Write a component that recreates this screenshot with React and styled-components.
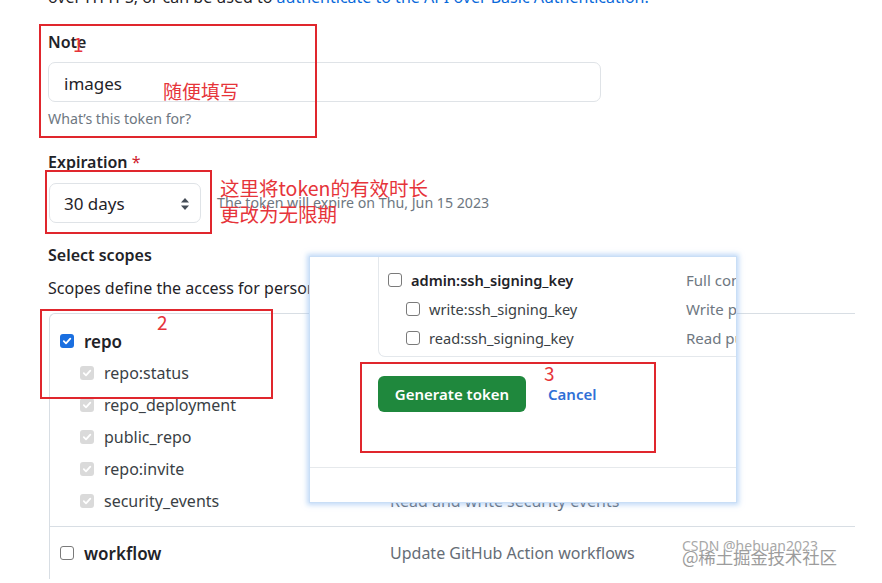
import React from "react";
import styled, { createGlobalStyle } from "styled-components";

const Global = createGlobalStyle`
  html, body { margin: 0; padding: 0; background: #fff; }
  body {
    font-family: "Noto Sans", "Noto Sans CJK SC", sans-serif;
    color: #1f2328;
  }
  * { box-sizing: border-box; }
`;

const Page = styled.div`
  position: relative;
  width: 882px;
  height: 583px;
  overflow: hidden;
  background: #fff;
`;

const Content = styled.div`
  display: flex;
  flex-direction: column;
  align-items: flex-start;
  padding-left: 48px;
`;

const TopText = styled.p`
  position: relative;
  margin: -13px 0 0;
  font-size: 16px;
  line-height: 20px;
  height: 20px;
  white-space: nowrap;
  color: #1f2328;
`;

const TopRule = styled.span`
  position: absolute;
  left: 615px;
  top: 12px;
  width: 190px;
  border-top: 1px solid #dcdfe3;
`;

const Link = styled.span`
  color: #0969da;
`;

const Label = styled.div`
  margin-top: ${p => p.$mt}px;
  font-size: 16px;
  font-weight: 600;
  line-height: 24px;
  color: #1f2328;
`;

const Req = styled.span`
  color: #cf222e;
  font-weight: 400;
`;

const TextInput = styled.div`
  margin-top: 8px;
  width: 553px;
  height: 40px;
  border: 1px solid #dfe3e7;
  border-radius: 7px;
  padding-left: 15px;
  padding-top: 2px;
  display: flex;
  align-items: center;
  font-size: 17px;
  color: #1f2328;
`;

const Hint = styled.div`
  margin-top: ${p => p.$mt || 0}px;
  font-size: 14.2px;
  line-height: 20px;
  color: #6e7781;
  white-space: nowrap;
`;

const SelectRow = styled.div`
  margin-top: 9px;
  margin-left: 1px;
  display: flex;
  align-items: center;
  gap: 16px;
`;

const Select = styled.div`
  width: 152px;
  height: 40px;
  border: 1px solid #dfe3e7;
  border-radius: 7px;
  padding: 1px 10px 0 14px;
  display: flex;
  align-items: center;
  justify-content: space-between;
  font-size: 17px;
  color: #1f2328;
`;

const Para = styled.div`
  margin-top: 9px;
  font-size: 16px;
  line-height: 24px;
  white-space: nowrap;
  color: #1f2328;
`;

const ScopeTable = styled.div`
  margin-top: 13px;
  margin-left: 1px;
  width: 806px;
  border-left: 1px solid #d8dee4;
  border-top: 1px solid #d8dee4;
  border-top-left-radius: 6px;
`;

const Group = styled.div`
  padding: ${p => p.$pt}px 0 ${p => p.$pb}px;
  border-top: ${p => (p.$first ? "none" : "1px solid #d8dee4")};
`;

const Row = styled.div`
  display: grid;
  grid-template-columns: 330px 1fr;
  align-items: center;
  height: 32px;
  padding-left: 10px;
  font-size: 16px;
  white-space: nowrap;
`;

const NameCell = styled.div`
  display: flex;
  align-items: center;
  gap: 10px;
  padding-left: ${p => (p.$sub ? 20 : 0)}px;
  font-weight: ${p => (p.$sub ? 400 : 600)};
  color: ${p => (p.$sub ? "#3a3f45" : "#1f2328")};
  font-size: ${p => (p.$sub ? 16 : 17)}px;
`;

const Desc = styled.div`
  color: #656d76;
  font-size: 16px;
  overflow: hidden;
`;

const Box = styled.span`
  flex: none;
  width: ${p => p.$size}px;
  height: ${p => p.$size}px;
  border-radius: 3px;
  display: inline-flex;
  align-items: center;
  justify-content: center;
  ${p =>
    p.$state === "checked"
      ? "background:#1a6fe0; border:none;"
      : p.$state === "disabled"
      ? "background:#dadada; border:none;"
      : "background:#fff; border:1.5px solid #7a7a7a;"}
`;

const Checkbox = ({ state, size = 14 }) => (
  <Box $state={state} $size={size}>
    {state !== "empty" && (
      <svg width={size - 4} height={size - 4} viewBox="0 0 10 10">
        <path d="M1.8 5.2 L4 7.3 L8.3 2.6" fill="none" stroke="#fff" strokeWidth="1.8" strokeLinecap="round" strokeLinejoin="round" />
      </svg>
    )}
  </Box>
);

/* Overlaid pasted screenshot */
const Popup = styled.div`
  position: absolute;
  left: 309px;
  top: 256px;
  width: 428px;
  height: 247px;
  background: #fff;
  border: 1px solid #c9def6;
  box-shadow: 0 0 5px 2px rgba(140, 185, 240, 0.55);
  overflow: hidden;
  display: flex;
  flex-direction: column;
`;

const PopupTop = styled.div`
  padding-left: 68px;
  display: flex;
  flex-direction: column;
`;

const InnerBox = styled.div`
  width: 400px;
  height: 101px;
  margin-top: -1px;
  padding-top: 9px;
  border-left: 1px solid #e4e8ec;
  border-bottom: 1px solid #e4e8ec;
  border-bottom-left-radius: 7px;
`;

const PRow = styled.div`
  display: grid;
  grid-template-columns: 298px 1fr;
  align-items: center;
  height: 29px;
  padding-left: 9px;
  white-space: nowrap;
  font-size: 14.6px;
`;

const PName = styled.div`
  display: flex;
  align-items: center;
  gap: 9px;
  padding-left: ${p => (p.$sub ? 18 : 0)}px;
  font-weight: ${p => (p.$sub ? 400 : 600)};
  color: ${p => (p.$sub ? "#3a3f45" : "#1f2328")};
`;

const PDesc = styled.div`
  color: #6e7781;
  font-size: 15px;
`;

const ButtonRow = styled.div`
  margin-top: 19px;
  display: flex;
  align-items: center;
  gap: 22px;
`;

const GreenButton = styled.div`
  width: 148px;
  height: 36px;
  border-radius: 6px;
  background: #1f883d;
  color: #fff;
  font-size: 15px;
  font-weight: 600;
  display: flex;
  align-items: center;
  justify-content: center;
`;

const CancelLink = styled.div`
  color: #2f6fd6;
  font-size: 15px;
  font-weight: 600;
`;

const PopupRule = styled.div`
  margin-top: 55px;
  border-top: 1px solid #e6e9ec;
`;

/* Red annotations */
const RedBox = styled.div`
  position: absolute;
  left: ${p => p.$x}px;
  top: ${p => p.$y}px;
  width: ${p => p.$w}px;
  height: ${p => p.$h}px;
  border: 2px solid #e0262d;
`;

const RedNote = styled.div`
  position: absolute;
  left: ${p => p.$x}px;
  top: ${p => p.$y}px;
  font-family: "Noto Sans CJK SC", "Noto Sans", sans-serif;
  font-size: ${p => p.$fs}px;
  line-height: ${p => p.$lh || p.$fs + 6}px;
  font-weight: ${p => p.$fw || 400};
  color: #e6343a;
  white-space: nowrap;
`;

const Watermark = styled.div`
  position: absolute;
  left: 682px;
  top: 537px;
  display: flex;
  flex-direction: column;
  font-family: "Noto Sans", "Noto Sans CJK SC", sans-serif;
  white-space: nowrap;
`;

const WmTop = styled.span`
  font-size: 14px;
  line-height: 18px;
  color: #a8a8a8;
`;

const WmBottom = styled.span`
  margin-top: -9px;
  font-family: "Noto Sans CJK SC", sans-serif;
  font-size: 17.5px;
  line-height: 22px;
  color: #9c9c9c;
  letter-spacing: -0.2px;
  text-shadow: 0 0 1px #fff, 0 0 1px #fff;
`;

const repoSubs = [
  ["repo:status", "Access commit status"],
  ["repo_deployment", "Access deployment status"],
  ["public_repo", "Access public repositories"],
  ["repo:invite", "Access repository invitations"],
  ["security_events", "Read and write security events"],
];

const sshRows = [
  ["admin:ssh_signing_key", "Full control of public user SSH signing keys", false],
  ["write:ssh_signing_key", "Write public user SSH signing keys", true],
  ["read:ssh_signing_key", "Read public user SSH signing keys", true],
];

export default function App() {
  return (
    <Page>
      <Global />
      <Content>
        <TopText>
          over HTTPS, or can be used to <Link>authenticate to the API over Basic Authentication.</Link>
          <TopRule />
        </TopText>

        <Label $mt={23}>Note</Label>
        <TextInput>images</TextInput>
        <Hint $mt={7}>What’s this token for?</Hint>

        <Label $mt={21}>
          Expiration <Req>*</Req>
        </Label>
        <SelectRow>
          <Select>
            <span>30 days</span>
            <svg width="10" height="14" viewBox="0 0 10 14">
              <path d="M5 1 L9 5.5 H1 Z" fill="#444c56" />
              <path d="M5 13 L9 8.5 H1 Z" fill="#444c56" />
            </svg>
          </Select>
          <Hint>The token will expire on Thu, Jun 15 2023</Hint>
        </SelectRow>

        <Label $mt={20}>Select scopes</Label>
        <Para>
          Scopes define the access for personal tokens. <Link>Read more about OAuth scopes.</Link>
        </Para>

        <ScopeTable>
          <Group $first $pt={11} $pb={9}>
            <Row>
              <NameCell>
                <Checkbox state="checked" />
                repo
              </NameCell>
              <Desc>Full control of private repositories</Desc>
            </Row>
            {repoSubs.map(([n, d]) => (
              <Row key={n}>
                <NameCell $sub>
                  <Checkbox state="disabled" />
                  {n}
                </NameCell>
                <Desc>{d}</Desc>
              </Row>
            ))}
          </Group>
          <Group $pt={10} $pb={10}>
            <Row>
              <NameCell>
                <Checkbox state="empty" />
                workflow
              </NameCell>
              <Desc>Update GitHub Action workflows</Desc>
            </Row>
          </Group>
        </ScopeTable>
      </Content>

      <Popup>
        <PopupTop>
          <InnerBox>
            {sshRows.map(([n, d, sub]) => (
              <PRow key={n}>
                <PName $sub={sub}>
                  <Checkbox state="empty" size={14} />
                  {n}
                </PName>
                <PDesc>{d}</PDesc>
              </PRow>
            ))}
          </InnerBox>
          <ButtonRow>
            <GreenButton>Generate token</GreenButton>
            <CancelLink>Cancel</CancelLink>
          </ButtonRow>
        </PopupTop>
        <PopupRule />
      </Popup>

      <RedBox $x={39} $y={24} $w={278} $h={114} />
      <RedBox $x={45} $y={170} $w={167} $h={64} />
      <RedBox $x={40} $y={309} $w={233} $h={90} />
      <RedBox $x={360} $y={362} $w={296} $h={91} />

      <RedNote $x={73} $y={31} $fs={19}>1</RedNote>
      <RedNote $x={163} $y={78} $fs={19} $lh={26}>随便填写</RedNote>
      <RedNote $x={220} $y={175} $fs={19.5} $lh={26}>
        这里将token的有效时长
        <br />
        更改为无限期
      </RedNote>
      <RedNote $x={157} $y={309} $fs={19}>2</RedNote>
      <RedNote $x={544} $y={360} $fs={19}>3</RedNote>

      <Watermark>
        <WmTop>CSDN @hebuan2023</WmTop>
        <WmBottom>@稀土掘金技术社区</WmBottom>
      </Watermark>
    </Page>
  );
}
